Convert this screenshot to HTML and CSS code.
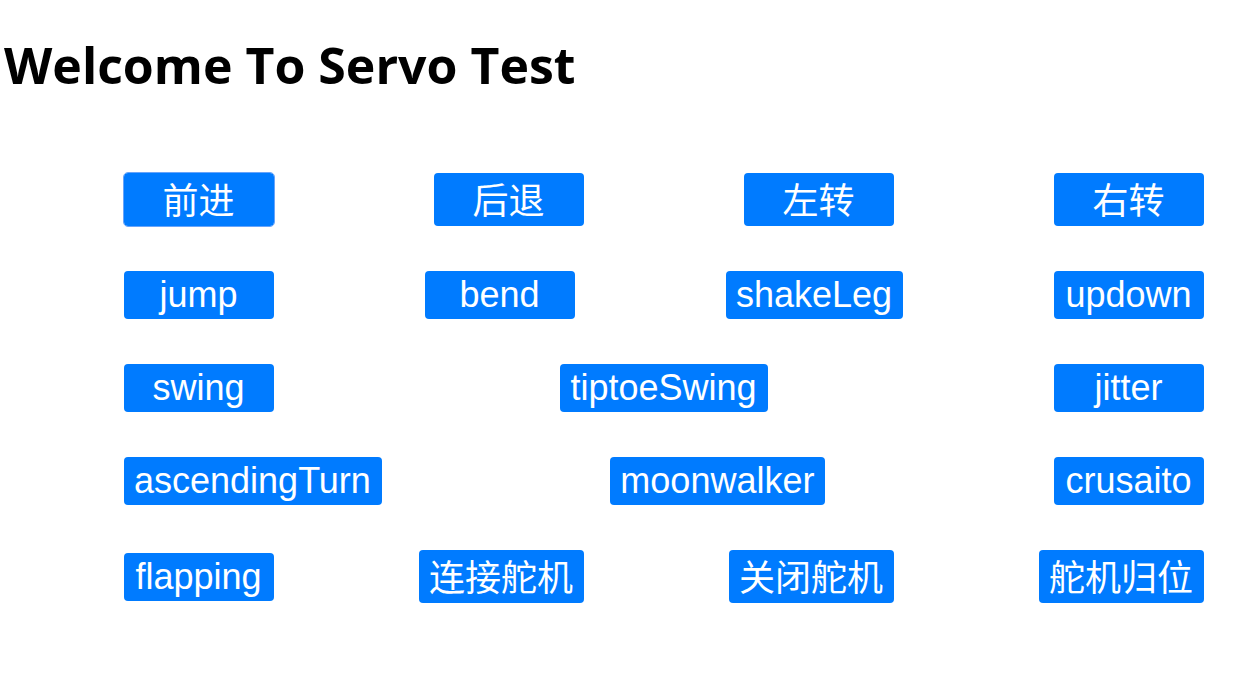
FILE: index.html
```html
<!DOCTYPE html>
<html lang="zh-CN">
<head>
<meta charset="utf-8">
<meta name="viewport" content="width=device-width, initial-scale=1">
<title>Servo Test</title>
<link rel="stylesheet" href="styles.css">
</head>
<body>
<h1 class="title">Welcome To Servo Test</h1>
<main class="controls">
  <div class="row">
    <button type="button" class="btn btn-cjk btn-active">前进</button>
    <button type="button" class="btn btn-cjk">后退</button>
    <button type="button" class="btn btn-cjk">左转</button>
    <button type="button" class="btn btn-cjk">右转</button>
  </div>
  <div class="row">
    <button type="button" class="btn">jump</button>
    <button type="button" class="btn">bend</button>
    <button type="button" class="btn">shakeLeg</button>
    <button type="button" class="btn">updown</button>
  </div>
  <div class="row">
    <button type="button" class="btn">swing</button>
    <button type="button" class="btn">tiptoeSwing</button>
    <button type="button" class="btn">jitter</button>
  </div>
  <div class="row">
    <button type="button" class="btn">ascendingTurn</button>
    <button type="button" class="btn">moonwalker</button>
    <button type="button" class="btn">crusaito</button>
  </div>
  <div class="row">
    <button type="button" class="btn">flapping</button>
    <button type="button" class="btn btn-cjk">连接舵机</button>
    <button type="button" class="btn btn-cjk">关闭舵机</button>
    <button type="button" class="btn btn-cjk">舵机归位</button>
  </div>
</main>
</body>
</html>
```
FILE: styles.css
```css
body {
  margin: 0;
  background: #fff;
  color: #000;
}

.title {
  margin: 30px 4px 0;
  font: bold 50px/70px "Open Sans", "Noto Sans", sans-serif;
}

.controls {
  display: flex;
  flex-direction: column;
  gap: 45px;
  padding: 73px 40px 40px 124px;
}

.row {
  display: flex;
  justify-content: space-between;
  align-items: center;
}

.btn {
  box-sizing: border-box;
  min-width: 150px;
  height: 48px;
  padding: 0 11px 0 10px;
  border: 0;
  border-radius: 4px;
  background: #007bff;
  color: #fff;
  font: 36px/48px "Liberation Sans", "Noto Sans CJK SC", sans-serif;
}

.btn-cjk {
  height: 53px;
  padding-top: 5px;
  line-height: 48px;
}

.btn-active {
  outline: 1px solid #68a4fa;
}
```
